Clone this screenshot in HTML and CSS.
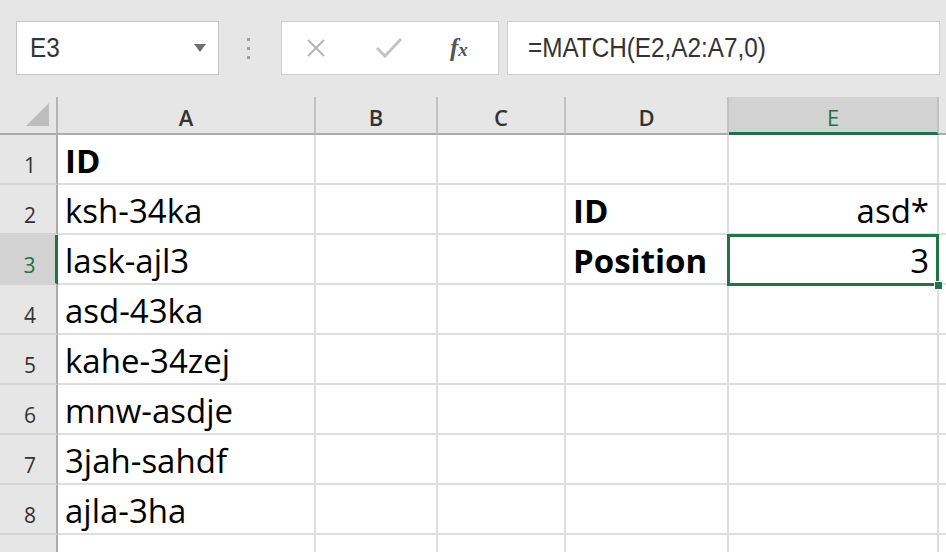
FILE: index.html
```html
<!DOCTYPE html>
<html lang="en">
<head>
    <meta charset="UTF-8">
    <title>MATCH wildcard</title>
    <link rel="stylesheet" href="styles.css">
</head>
<body>
    <div class="toolbar">
        <div class="namebox">
            <span class="narrow">E3</span>
            <span class="caret"></span>
        </div>
        <div class="grip"><i></i><i></i><i></i></div>
        <div class="fx-buttons">
            <svg class="icon-x" width="20" height="18" viewBox="0 0 20 18">
                <path d="M2 1 L18 17 M18 1 L2 17" stroke="#b4b4b4" stroke-width="2" fill="none"/>
            </svg>
            <svg class="icon-check" width="28" height="22" viewBox="0 0 28 22">
                <path d="M2 11 L10 19 L26 2" stroke="#c4c4c4" stroke-width="3" fill="none"/>
            </svg>
            <span class="fx">f<span class="fx-x">x</span></span>
        </div>
        <div class="formula"><span class="narrow">=MATCH(E2,A2:A7,0)</span></div>
    </div>

    <div class="sheet">
        <div class="corner"><span class="tri"></span></div>
        <div class="col-head">A</div>
        <div class="col-head">B</div>
        <div class="col-head">C</div>
        <div class="col-head">D</div>
        <div class="col-head active">E</div>
        <div class="col-head"></div>

        <div class="row-head">1</div>
        <div class="cell bold">ID</div><div class="cell"></div><div class="cell"></div><div class="cell"></div><div class="cell"></div><div class="cell"></div>

        <div class="row-head">2</div>
        <div class="cell">ksh-34ka</div><div class="cell"></div><div class="cell"></div><div class="cell bold">ID</div><div class="cell num">asd*</div><div class="cell"></div>

        <div class="row-head active">3</div>
        <div class="cell">lask-ajl3</div><div class="cell"></div><div class="cell"></div><div class="cell bold">Position</div><div class="cell num selected">3</div><div class="cell"></div>

        <div class="row-head">4</div>
        <div class="cell">asd-43ka</div><div class="cell"></div><div class="cell"></div><div class="cell"></div><div class="cell"></div><div class="cell"></div>

        <div class="row-head">5</div>
        <div class="cell">kahe-34zej</div><div class="cell"></div><div class="cell"></div><div class="cell"></div><div class="cell"></div><div class="cell"></div>

        <div class="row-head">6</div>
        <div class="cell">mnw-asdje</div><div class="cell"></div><div class="cell"></div><div class="cell"></div><div class="cell"></div><div class="cell"></div>

        <div class="row-head">7</div>
        <div class="cell">3jah-sahdf</div><div class="cell"></div><div class="cell"></div><div class="cell"></div><div class="cell"></div><div class="cell"></div>

        <div class="row-head">8</div>
        <div class="cell">ajla-3ha</div><div class="cell"></div><div class="cell"></div><div class="cell"></div><div class="cell"></div><div class="cell"></div>

        <div class="row-head last"></div>
        <div class="cell last"></div><div class="cell last"></div><div class="cell last"></div><div class="cell last"></div><div class="cell last"></div><div class="cell last"></div>
    </div>
</body>
</html>
```

FILE: styles.css
```css
body {
    margin: 0;
    background-color: #fff;
    overflow: hidden;
}
.toolbar {
    height: 97px;
    box-sizing: border-box;
    padding-top: 21px;
    padding-left: 16px;
    background-color: #e6e6e6;
    display: flex;
    align-items: flex-start;
    font-family: "Liberation Sans", Arial, sans-serif;
    color: #333;
}
.narrow {
    display: inline-block;
    font-size: 27px;
    transform: scaleX(0.9);
    transform-origin: left center;
}
.namebox {
    width: 203px;
    height: 54px;
    box-sizing: border-box;
    background-color: #fff;
    border: 1px solid #c6c6c6;
    display: flex;
    align-items: center;
    justify-content: space-between;
    padding: 0 12px 0 13px;
}
.caret {
    width: 0;
    height: 0;
    border-left: 6px solid transparent;
    border-right: 6px solid transparent;
    border-top: 8px solid #707070;
}
.grip {
    width: 4px;
    height: 54px;
    margin-left: 28px;
    display: flex;
    flex-direction: column;
    justify-content: center;
    gap: 6px;
}
.grip i {
    display: block;
    width: 3px;
    height: 3px;
    background-color: #9f9f9f;
}
.fx-buttons {
    width: 218px;
    height: 54px;
    box-sizing: border-box;
    margin-left: 30px;
    background-color: #fff;
    border: 1px solid #cfcfcf;
    display: flex;
    align-items: center;
    padding-left: 24px;
}
.icon-check {
    margin-left: 49px;
}
.fx {
    margin-left: 47px;
    font-family: "Liberation Serif", "Times New Roman", serif;
    font-style: italic;
    font-weight: bold;
    font-size: 25px;
    color: #555;
}
.fx-x {
    font-size: 19px;
}
.formula {
    width: 433px;
    height: 54px;
    box-sizing: border-box;
    margin-left: 8px;
    background-color: #fff;
    border: 1px solid #cfcfcf;
    padding-left: 20px;
    display: flex;
    align-items: center;
}

.sheet {
    display: grid;
    grid-template-columns: 58px 258px 122px 128px 163px 210px 1fr;
    grid-template-rows: 38px repeat(8, 50px) 18px;
    font-family: "Open Sans", "Noto Sans", sans-serif;
    color: #000;
}
.corner, .col-head, .row-head {
    background-color: #e6e6e6;
    color: #333;
    box-sizing: border-box;
}
.corner {
    border-right: 2px solid #b4b4b4;
    border-bottom: 2px solid #ababab;
    position: relative;
}
.corner .tri {
    position: absolute;
    right: 7px;
    bottom: 7px;
    width: 0;
    height: 0;
    border-left: 23px solid transparent;
    border-bottom: 23px solid #bdbdbd;
}
.col-head {
    border-right: 2px solid #c2c2c2;
    border-bottom: 2px solid #ababab;
    display: flex;
    justify-content: center;
    align-items: center;
    font-size: 22px;
    font-weight: 600;
    padding-top: 4px;
}
.col-head.active {
    background-color: #d2d2d2;
    color: #217346;
    font-weight: 500;
    border-bottom: 3px solid #217346;
}
.row-head {
    border-right: 2px solid #ababab;
    border-bottom: 2px solid #d4d4d4;
    display: flex;
    justify-content: center;
    align-items: flex-end;
    font-size: 21px;
    font-weight: 500;
    line-height: 36px;
    padding-left: 4px;
}
.row-head.active {
    background-color: #d2d2d2;
    color: #217346;
    border-right: 3px solid #217346;
}
.cell {
    box-sizing: border-box;
    border-right: 2px solid #dedede;
    border-bottom: 2px solid #dedede;
    display: flex;
    align-items: flex-end;
    padding: 0 8px 2px 7px;
    font-size: 33px;
    line-height: 40px;
    white-space: nowrap;
}
.row-head.last, .cell.last {
    border-bottom: none;
}
.cell.bold {
    font-weight: bold;
}
.cell.num {
    justify-content: flex-end;
}
.cell.selected {
    position: relative;
}
.cell.selected::after {
    content: "";
    position: absolute;
    left: -2px;
    top: -1px;
    right: -2px;
    bottom: -3px;
    border: 3px solid #217346;
}
.cell.selected::before {
    content: "";
    position: absolute;
    right: -6px;
    bottom: -7px;
    width: 7px;
    height: 7px;
    background-color: #217346;
    border: 1px solid #fff;
    z-index: 1;
}
```
